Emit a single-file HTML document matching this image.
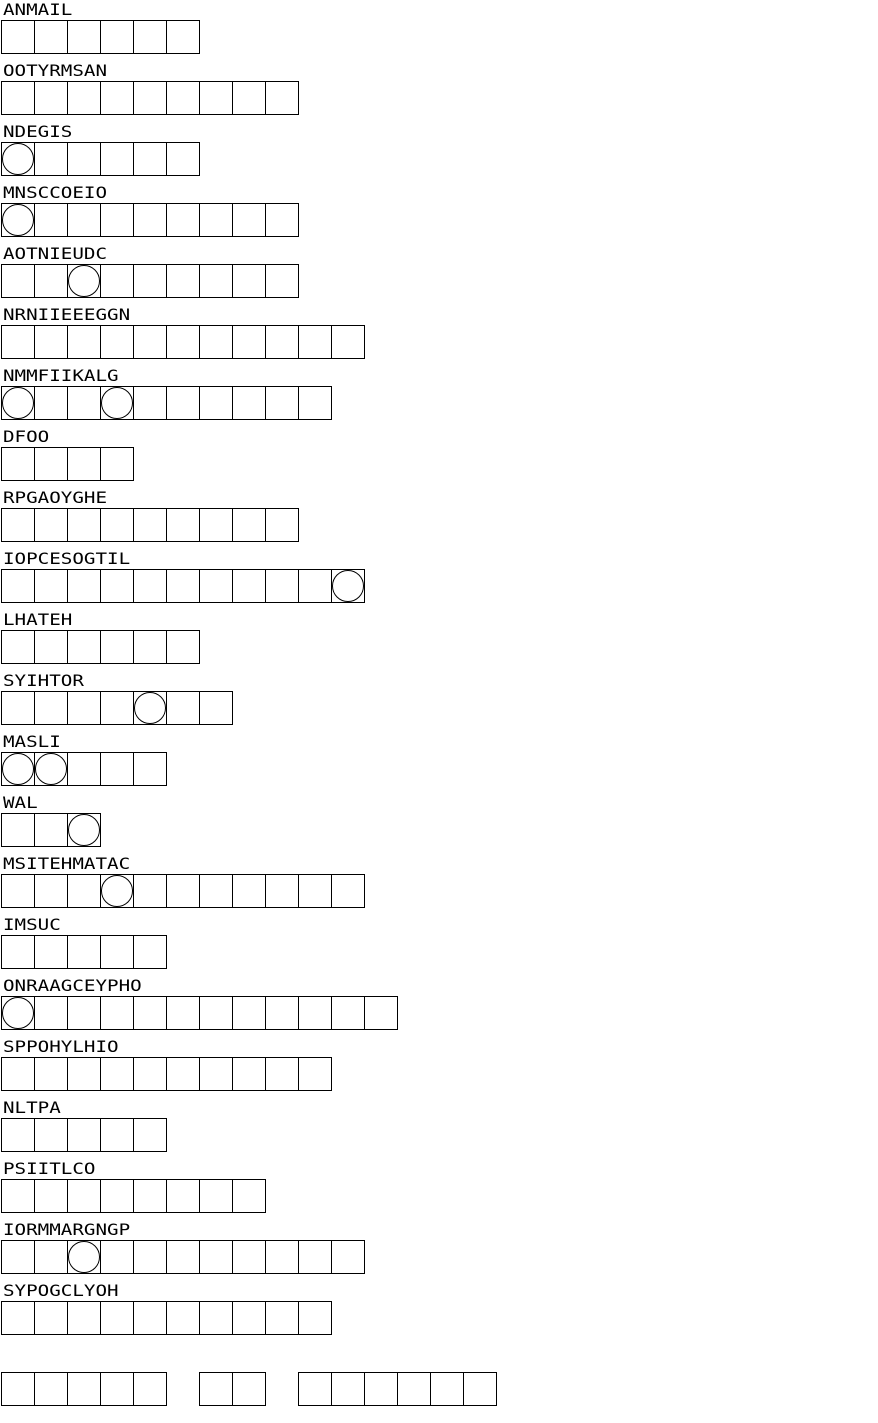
<!DOCTYPE html>
<html><head><meta charset="utf-8">
<style>
html,body{margin:0;padding:0;background:#fff;width:878px;height:1423px;overflow:hidden;position:relative}
.l{position:absolute;left:3px;margin-top:1px;font-family:"DejaVu Sans Mono","Liberation Mono",monospace;font-size:16px;line-height:18px;color:#000;white-space:nowrap;transform:scaleX(1.2);transform-origin:0 0}
.c{position:absolute;width:32px;height:32px;border:1px solid #000;box-sizing:content-box}
.o{position:absolute;left:0;top:0;width:30px;height:30px;border:1px solid #000;border-radius:50%}
</style></head><body>
<div class="l" style="top:0px">ANMAIL</div>
<div class="l" style="top:61px">OOTYRMSAN</div>
<div class="l" style="top:122px">NDEGIS</div>
<div class="l" style="top:183px">MNSCCOEIO</div>
<div class="l" style="top:244px">AOTNIEUDC</div>
<div class="l" style="top:305px">NRNIIEEEGGN</div>
<div class="l" style="top:366px">NMMFIIKALG</div>
<div class="l" style="top:427px">DFOO</div>
<div class="l" style="top:488px">RPGAOYGHE</div>
<div class="l" style="top:549px">IOPCESOGTIL</div>
<div class="l" style="top:610px">LHATEH</div>
<div class="l" style="top:671px">SYIHTOR</div>
<div class="l" style="top:732px">MASLI</div>
<div class="l" style="top:793px">WAL</div>
<div class="l" style="top:854px">MSITEHMATAC</div>
<div class="l" style="top:915px">IMSUC</div>
<div class="l" style="top:976px">ONRAAGCEYPHO</div>
<div class="l" style="top:1037px">SPPOHYLHIO</div>
<div class="l" style="top:1098px">NLTPA</div>
<div class="l" style="top:1159px">PSIITLCO</div>
<div class="l" style="top:1220px">IORMMARGNGP</div>
<div class="l" style="top:1281px">SYPOGCLYOH</div>
<script>
var rows=[[6,[]],[9,[]],[6,[0]],[9,[0]],[9,[2]],[11,[]],[10,[0,3]],[4,[]],[9,[]],[11,[10]],[6,[]],[7,[4]],[5,[0,1]],[3,[2]],[11,[3]],[5,[]],[12,[0]],[10,[]],[5,[]],[8,[]],[11,[2]],[10,[]]];
var h='';
function cell(x,y,circ){h+='<div class="c" style="left:'+x+'px;top:'+y+'px">'+(circ?'<div class="o"></div>':'')+'</div>';}
rows.forEach(function(r,i){var y=20+61*i;for(var k=0;k<r[0];k++)cell(1+33*k,y,r[1].indexOf(k)>=0);});
[[0,5],[6,2],[9,6]].forEach(function(g){for(var k=0;k<g[1];k++)cell(1+33*(g[0]+k),1372,false);});
document.body.insertAdjacentHTML('beforeend',h);
</script>
</body></html>
